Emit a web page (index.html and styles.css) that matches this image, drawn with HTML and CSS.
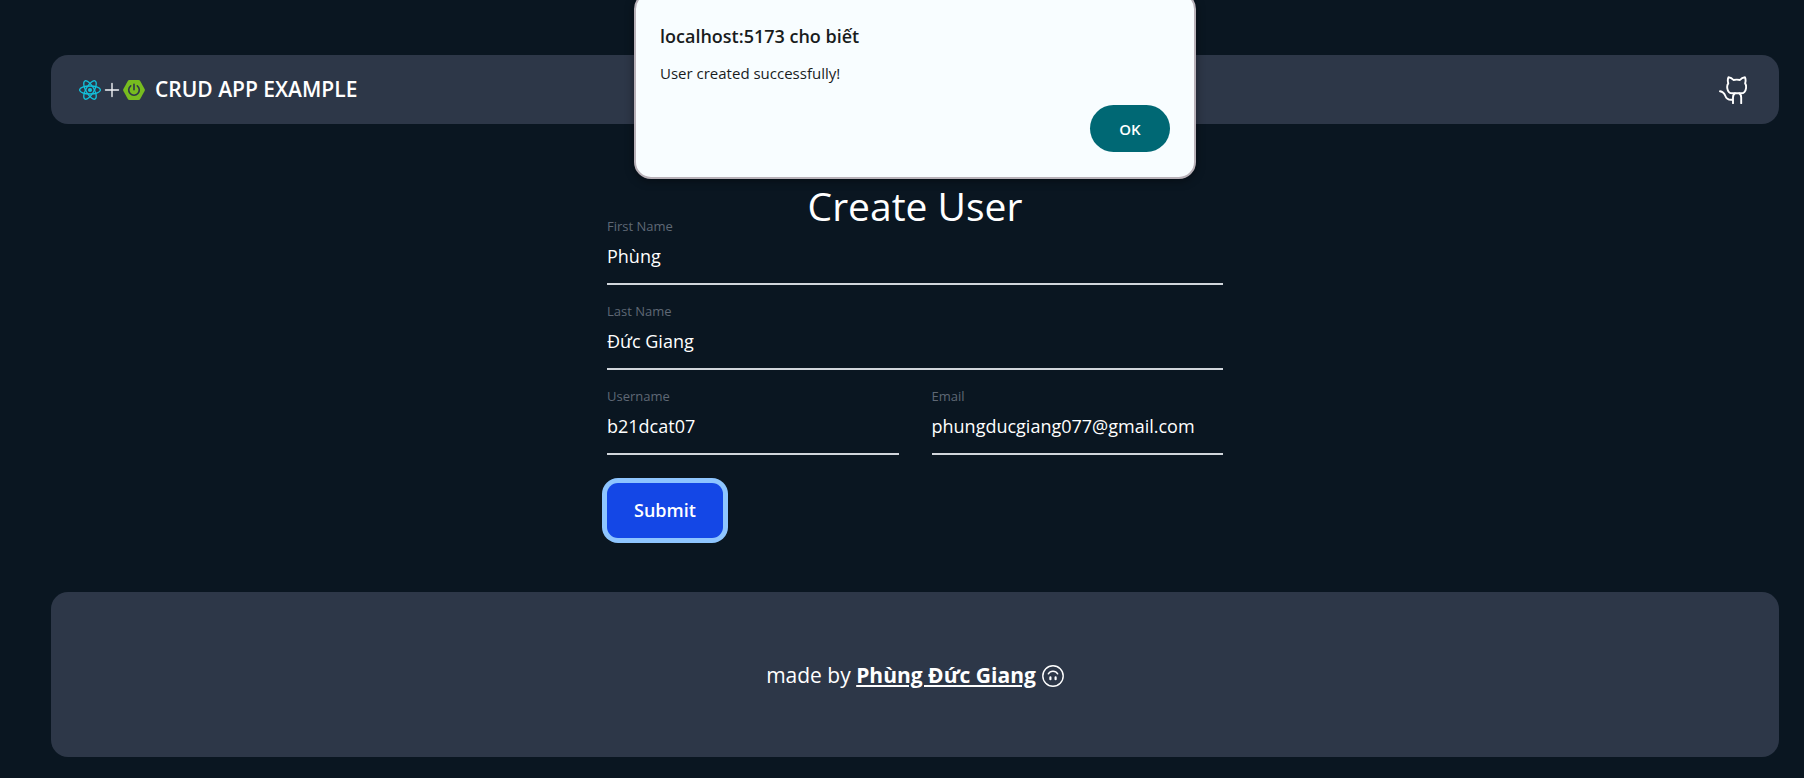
FILE: index.html
```html
<!DOCTYPE html>
<html lang="vi">
<head>
<meta charset="utf-8">
<title>CRUD App Example</title>
<link rel="stylesheet" href="styles.css">
</head>
<body>
<div class="page">
  <header class="navbar">
    <div class="brand">
      <svg class="logo" viewBox="0 0 22 22" fill="none" stroke="#12c2dc" stroke-width="1.3" aria-hidden="true">
        <ellipse cx="11" cy="11" rx="10.4" ry="4"/>
        <ellipse cx="11" cy="11" rx="10.4" ry="4" transform="rotate(60 11 11)"/>
        <ellipse cx="11" cy="11" rx="10.4" ry="4" transform="rotate(120 11 11)"/>
        <circle cx="11" cy="11" r="2.1" fill="#12c2dc" stroke="none"/>
      </svg>
      <svg class="logo" viewBox="0 0 22 22" fill="none" stroke="#f1f3f6" stroke-width="1.4" stroke-linecap="round" aria-hidden="true">
        <path d="M11 4.500v13M4.500 11h13"/>
      </svg>
      <svg class="logo" viewBox="0 0 22 22" fill="none" aria-hidden="true">
        <path d="M6.300 1h9.400q1 0 1.500.9l4.400 8.100q.5 1 0 2l-4.400 8.100q-.5.9-1.500.9H6.300q-1 0-1.500-.9L.4 12q-.5-1 0-2l4.400-8.100Q5.300 1 6.300 1z" fill="#77bc1f"/>
        <path d="M11 5.200v5.600M7.700 6.800a5.300 5.300 0 1 0 6.600 0" stroke="#2d3748" stroke-width="1.600" stroke-linecap="round"/>
      </svg>
      <span class="brand-name">CRUD APP EXAMPLE</span>
    </div>
    <a class="repo" href="#" aria-label="Repository">
      <svg class="cat" viewBox="0 0 28 28" fill="none" stroke="#fff" stroke-width="1.900" stroke-linecap="round" stroke-linejoin="round">
        <path d="M9.300 7.300C8.500 5 8.700 3 9.500 1.200c2 .1 3.800 1.200 5 2.800 2-.5 4.500-.5 6.400 0 1.200-1.600 3-2.700 5-2.800.8 1.800 1 3.800.2 6.100 1.100 1.400 1.200 3 .9 5-.5 3.600-2.300 5-5 5H13.300c-2.700 0-4.500-1.400-5-5-.3-2-.1-3.600 1-5z"/>
        <path d="M14 27.200v-5.700c0-2 .8-3.300 2-4.200M22.200 27.200v-5.700c0-2-.8-3.300-2-4.200M14 23.600c-4 .7-6.600-.8-7.600-3.600C5.300 17 4 15.700 1 15.300"/>
      </svg>
    </a>
  </header>

  <main class="content">
    <h1 class="title">Create User</h1>
    <form class="form">
      <div class="field wide">
        <label for="first">First Name</label>
        <input id="first" type="text" value="Phùng">
      </div>
      <div class="field wide">
        <label for="last">Last Name</label>
        <input id="last" type="text" value="Đức Giang">
      </div>
      <div class="field">
        <label for="user">Username</label>
        <input id="user" type="text" value="b21dcat07">
      </div>
      <div class="field">
        <label for="email">Email</label>
        <input id="email" type="email" value="phungducgiang077@gmail.com">
      </div>
      <button class="submit" type="button">Submit</button>
    </form>
  </main>

  <footer class="footer">
    <p class="credit">made by <a href="#">Phùng Đức Giang</a></p>
    <svg class="smile" viewBox="0 0 22 22" fill="none" stroke="#fff" stroke-width="1.400" stroke-linecap="round" aria-hidden="true">
      <circle cx="11" cy="11" r="10.200"/>
      <path d="M6.300 8.800C8.300 5.300 13.700 5.300 15.700 8.800"/>
      <path d="M8.400 12.400v1.800M13.600 12.400v1.800" stroke-width="2.200"/>
    </svg>
  </footer>
</div>

<div class="dialog" role="alertdialog" aria-labelledby="dialog-title" aria-describedby="dialog-text">
  <h2 id="dialog-title">localhost:5173 cho biết</h2>
  <p id="dialog-text">User created successfully!</p>
  <button class="ok" type="button">OK</button>
</div>
</body>
</html>
```
FILE: styles.css
```css
* {
  box-sizing: border-box;
}

body {
  margin: 0;
  background: #0a1621;
  color: #fff;
  font-family: "Open Sans", "Noto Sans", sans-serif;
}

.page {
  display: flex;
  flex-direction: column;
  min-height: 100vh;
  padding: 55px 25px 21px 51px;
}

.navbar {
  display: flex;
  align-items: center;
  justify-content: space-between;
  padding: 20px 32px 20px 28px;
  border-radius: 17px;
  background: #2d3748;
}

.brand {
  display: flex;
  align-items: center;
}

.logo {
  width: 22px;
  height: 22px;
}

.brand-name {
  margin-left: 10px;
  font-size: 21px;
  line-height: 29px;
  font-weight: 600;
}

.repo,
.cat {
  display: block;
  width: 28px;
  height: 28px;
}

.content {
  width: 616px;
  max-width: 100%;
  margin: 54px auto 0;
}

.title {
  margin: 0;
  font-size: 39px;
  line-height: 56px;
  font-weight: 400;
  text-align: center;
}

.form {
  display: grid;
  grid-template-columns: 1fr 1fr;
  column-gap: 33px;
  row-gap: 16px;
  margin-top: -18px;
}

.field {
  display: flex;
  flex-direction: column;
}

.wide {
  grid-column: 1 / -1;
}

.field label {
  color: #5f6875;
  font-size: 13px;
  line-height: 20px;
}

.field input {
  width: 100%;
  height: 49px;
  padding: 0 0 8px;
  border: 0;
  border-bottom: 2px solid #d1d5db;
  border-radius: 0;
  outline: 0;
  background: transparent;
  color: #fff;
  font: 400 18px/24px "Open Sans", "Noto Sans", sans-serif;
}

.submit {
  justify-self: start;
  margin-top: 12px;
  padding: 15px 27px 16px;
  border: 0;
  border-radius: 11px;
  background: #1447e6;
  box-shadow: 0 0 0 5px #8ec5ff;
  color: #fff;
  font: 600 18px/24px "Open Sans", "Noto Sans", sans-serif;
}

.footer {
  display: flex;
  align-items: center;
  justify-content: center;
  gap: 6px;
  margin-top: auto;
  padding: 67px 24px 65px;
  border-radius: 17px;
  background: #2d3748;
}

.credit {
  margin: 0;
  font-size: 21px;
  line-height: 33px;
}

.credit a {
  color: #fff;
  font-weight: 700;
  text-decoration-thickness: 2px;
  text-underline-offset: 2px;
}

.smile {
  width: 22px;
  height: 22px;
}

.dialog {
  position: absolute;
  top: -8px;
  left: 634px;
  display: flex;
  flex-direction: column;
  width: 562px;
  padding: 29px 24px 25px;
  border: 2px solid #b8b1b8;
  border-radius: 17px;
  background: #f8fdff;
  box-shadow: 0 2px 10px rgba(0, 0, 0, 0.4);
  color: #191c1d;
}

.dialog h2 {
  margin: 0;
  font-size: 18px;
  line-height: 26px;
  font-weight: 600;
}

.dialog p {
  margin: 12px 0 20px;
  font-size: 15px;
  line-height: 24px;
}

.ok {
  align-self: flex-end;
  width: 80px;
  height: 47px;
  border: 0;
  border-radius: 24px;
  background: #006874;
  color: #fff;
  font: 600 15px/24px "Open Sans", "Noto Sans", sans-serif;
}
```
